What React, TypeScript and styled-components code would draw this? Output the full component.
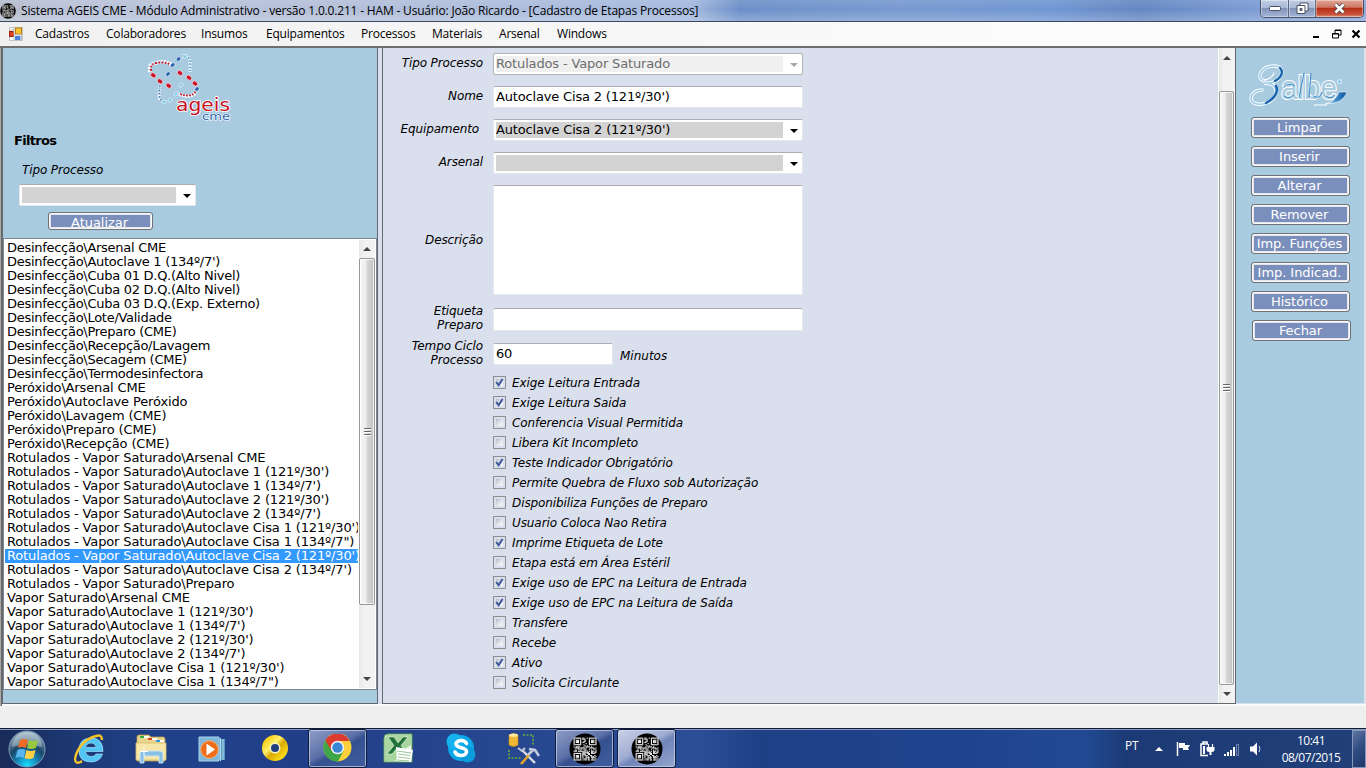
import React from "react";
import styled, { createGlobalStyle, css } from "styled-components";

const GlobalStyle = createGlobalStyle`
  html, body { margin: 0; padding: 0; overflow: hidden; }
  * { box-sizing: border-box; }
`;

const uiFont = `"Open Sans", "Noto Sans", sans-serif`;
const formFont = `"DejaVu Sans", sans-serif`;

const Desktop = styled.div`
  width: 1366px;
  height: 768px;
  display: flex;
  flex-direction: column;
  background: #efefef;
  color: #000;
  overflow: hidden;
`;

/* ---------- title bar and menu ---------- */

const TitleBar = styled.header`
  flex: 0 0 22px;
  display: flex;
  align-items: flex-start;
  border-bottom: 1px solid #3d4862;
  background:
    linear-gradient(180deg, rgba(255, 255, 255, 0.1), rgba(255, 255, 255, 0) 45%, rgba(255, 255, 255, 0.22)),
    linear-gradient(90deg, #b5bccb 0, #b9c2d8 60px, #b4c0d9 330px, #abbcdc 520px, #a5badf 690px, #6d90c9 740px, #7799cf 900px, #7096d2 1050px, #6587c2 1140px, #7a9bd2 1250px, #8ba8d8 1366px);
`;

const AppIconBox = styled.div`
  width: 21px;
  height: 21px;
  padding: 3px 0 0 0;
  svg { display: block; }
`;

const Title = styled.h1`
  margin: 0;
  flex: 1;
  font: 400 12px/21px ${uiFont};
  letter-spacing: -0.18px;
  white-space: nowrap;
`;

const CaptionButtons = styled.div`
  display: flex;
  height: 18px;
  width: 104px;
  margin-right: 2px;
  border: 1px solid #48526b;
  border-top: 0;
  border-radius: 0 0 5px 5px;
  overflow: hidden;
`;

const CaptionButton = styled.button<{ $w: number; $close?: boolean }>`
  width: ${(p) => p.$w}px;
  height: 17px;
  padding: 0;
  border: 0;
  border-right: 1px solid #5c6884;
  display: flex;
  align-items: center;
  justify-content: center;
  background: linear-gradient(180deg, #c3cfe4, #a9b8d5 45%, #8193b9 50%, #a5b6d6);
  box-shadow: inset 0 0 0 1px rgba(255, 255, 255, 0.35);
  ${(p) =>
    p.$close &&
    css`
      border-right: 0;
      background: linear-gradient(180deg, #e0a595, #cf7764 42%, #b83018 50%, #c9523a 85%, #e09a80);
    `}
`;

const MenuBar = styled.nav`
  flex: 0 0 24px;
  display: flex;
  align-items: center;
  padding: 0 5px 0 9px;
  background: linear-gradient(90deg, #f0f0f0, #f4f4f4 25%, #fbfbfb 75%, #fcfcfc);
`;

const MenuItems = styled.ul`
  flex: 1;
  display: flex;
  gap: 20px;
  margin: 0;
  padding: 0 0 0 12px;
  list-style: none;
`;

const MenuItem = styled.li<{ $w: number }>`
  width: ${(p) => p.$w}px;
  font: 400 12px/22px ${uiFont};
  letter-spacing: -0.2px;
  white-space: nowrap;
`;

const ChildControls = styled.div`
  display: flex;
  gap: 9px;
  svg { display: block; }
`;

/* ---------- workspace ---------- */

const Workspace = styled.main`
  flex: 0 0 660px;
  display: flex;
  padding: 0 1px 2px 2px;
  border-top: 2px solid #6e6e6e;
  background: #d9dfed;
  box-shadow: inset 1px 0 #a8a8a8, inset 2px 0 #686868, inset 0 -2px #fafafa;
`;

const FilterPanel = styled.aside`
  width: 376px;
  height: 656px;
  display: flex;
  flex-direction: column;
  background: #a9cbe0;
  border: 1px solid #646871;
  border-top: 0;
`;

const LogoArea = styled.div`
  height: 76px;
  padding: 4px 0 0 144px;
  svg { display: block; }
`;

const FilterTitle = styled.h2`
  margin: 8px 0 0 11px;
  font: 700 13px/17px ${formFont};
  letter-spacing: -0.7px;
`;

const FilterLabel = styled.label`
  margin: 13px 0 0 19px;
  font: italic 400 12px/16px ${formFont};
  letter-spacing: -0.12px;
`;

const FilterField = styled.div`
  width: 177px;
  margin: 6px 0 6px 16px;
`;

const Button = styled.button<{ $w: number; $h: number; $shift?: number; $drop?: number }>`
  flex: none;
  width: ${(p) => p.$w}px;
  height: ${(p) => p.$h}px;
  margin-left: ${(p) => p.$shift ?? 0}px;
  padding: ${(p) => p.$drop ?? 0}px 2px 0 0;
  border: 1px solid #6f7378;
  border-radius: 3px;
  background: #7b8fbd;
  box-shadow: inset 0 0 0 1px #f8f8f8, inset 0 0 0 2px #e4e6ea;
  color: #fff;
  font: 400 13px/17px ${formFont};
  letter-spacing: -0.05px;
  white-space: nowrap;
  overflow: hidden;
`;

const ListBox = styled.div`
  flex: none;
  width: 374px;
  height: 452px;
  margin-top: 8px;
  display: flex;
  padding: 1px;
  background: #fff;
  border: 1px solid #7f8790;
`;

const List = styled.ul`
  width: 353px;
  margin: 0 1px 0 0;
  padding: 1px 0 0;
  list-style: none;
  overflow: hidden;
`;

const ListItem = styled.li<{ $selected?: boolean; $tight?: boolean }>`
  height: 14px;
  padding-left: 2px;
  font: 400 13px/14px ${formFont};
  letter-spacing: ${(p) => (p.$tight ? "-0.28px" : "-0.14px")};
  white-space: nowrap;
  ${(p) => p.$selected && css`background: #3399ff; color: #fff;`}
`;

const Splitter = styled.div`
  width: 4px;
  background: #d9dfed;
`;

const FormPanel = styled.section`
  width: 854px;
  height: 656px;
  display: flex;
  border: 1px solid #646871;
  border-top: 0;
  background: #d9dfed;
`;

const Form = styled.form`
  flex: 1;
  padding: 5px 0 0 0;
`;

const FormRow = styled.div<{ $h: number; $gap: number }>`
  display: flex;
  gap: 10px;
  height: ${(p) => p.$h}px;
  margin-bottom: ${(p) => p.$gap}px;
`;

const Label = styled.label<{ $inset?: number; $lift?: number }>`
  width: 100px;
  display: flex;
  align-items: center;
  justify-content: flex-end;
  text-align: right;
  padding: 0 ${(p) => p.$inset ?? 0}px ${(p) => p.$lift ?? 2}px 0;
  font: italic 400 12px/14px ${formFont};
  letter-spacing: -0.12px;
`;

const inputFrame = css`
  border: 1px solid #e3e7ee;
  border-top-color: #abadb3;
  border-radius: 2px;
  background: #fff;
`;

const TextBox = styled.div<{ $w?: number }>`
  ${inputFrame}
  width: ${(p) => p.$w ?? 310}px;
  padding: 0 2px;
  font: 400 13px/20px ${formFont};
  letter-spacing: -0.17px;
  white-space: nowrap;
`;

const Combo = styled.div<{ $disabled?: boolean; $w: number }>`
  ${inputFrame}
  display: flex;
  align-items: center;
  width: ${(p) => p.$w}px;
  height: 22px;
  padding: 2px 4px 2px 2px;
  ${(p) => p.$disabled && css`border-color: #afb2b8; color: #6d6d6d;`}
`;

const ComboValue = styled.span<{ $disabled?: boolean }>`
  flex: 1;
  height: 16px;
  margin-right: 7px;
  background: ${(p) => (p.$disabled ? "#f0f0f0" : "#d3d3d3")};
  font: 400 13px/16px ${formFont};
  letter-spacing: -0.15px;
  white-space: nowrap;
`;

const ArrowDown = styled.i<{ $color?: string }>`
  border: 4px solid transparent;
  border-top-color: ${(p) => p.$color ?? "#000"};
  border-bottom: 0;
  margin-top: 1px;
`;

const Unit = styled.span`
  margin: 5px 0 0 -3px;
  font: italic 400 12px/16px ${formFont};
  letter-spacing: 0;
`;

const CheckList = styled.div`
  display: flex;
  flex-direction: column;
  padding: 7px 0 0 110px;
`;

const CheckRow = styled.label`
  height: 20px;
  display: flex;
  align-items: center;
  gap: 6px;
  padding-top: 1px;
  font: italic 400 12px/17px ${formFont};
  letter-spacing: -0.09px;
  white-space: nowrap;
`;

const CheckText = styled.span`
  padding-top: 1px;
`;

const CheckBox = styled.span`
  width: 13px;
  height: 13px;
  border: 1px solid #8e8f8f;
  background: linear-gradient(135deg, #b4bac8, #e4e7eb 55%, #fafafa) content-box #f4f4f4;
  padding: 2px;
  position: relative;
  svg { position: absolute; left: 0; top: 0; }
`;

/* ---------- scroll bars ---------- */

const ScrollTrack = styled.div<{ $w: number; $edge?: boolean }>`
  width: ${(p) => p.$w}px;
  display: flex;
  flex-direction: column;
  align-items: stretch;
  background: linear-gradient(90deg, #e8e8e8, #f1f1f1 30%, #f3f3f3);
  ${(p) =>
    p.$edge &&
    css`
      border-left: 1px solid #fafafa;
      padding-right: 1px;
    `}
`;

const ScrollArrow = styled.div<{ $h: number; $down?: boolean }>`
  flex: 0 0 ${(p) => p.$h}px;
  display: flex;
  align-items: center;
  justify-content: center;
  &::before {
    content: "";
    border: 4px solid transparent;
    ${(p) => (p.$down ? "border-top-color: #444; border-bottom: 0;" : "border-bottom-color: #444; border-top: 0;")}
  }
`;

const TrackSpace = styled.div<{ $h: number }>`
  flex: 0 0 ${(p) => p.$h}px;
`;

const Thumb = styled.div<{ $h: number }>`
  flex: 0 0 ${(p) => p.$h}px;
  border: 1px solid #979797;
  border-radius: 2px;
  display: flex;
  align-items: center;
  justify-content: center;
  background: linear-gradient(90deg, #f6f6f6 0, #ebebeb 45%, #d6d6d8 50%, #c3c4c7 95%);
  box-shadow: inset 0 0 0 1px rgba(255, 255, 255, 0.75);
`;

const Grip = styled.span`
  width: 7px;
  height: 8px;
  background: repeating-linear-gradient(180deg, #666 0 1px, #fff 1px 2px, transparent 2px 3px);
`;

const Filler = styled.div`
  flex: 1;
`;

/* ---------- action panel ---------- */

const ActionPanel = styled.aside`
  width: 129px;
  height: 655px;
  display: flex;
  flex-direction: column;
  gap: 8px;
  padding: 12px 0 0 15px;
  background: #a9cbe0;
  border-right: 1px solid #e4e4e4;
  > svg { display: block; flex: none; margin-left: -3px; }
`;

const StatusBar = styled.footer`
  flex: 0 0 22px;
  background: #efefef;
`;

/* ---------- task bar ---------- */

const TaskBar = styled.footer`
  flex: 0 0 40px;
  display: flex;
  border-top: 1px solid #111a33;
  box-shadow: inset 0 1px #8c9bc2;
  background: linear-gradient(90deg, #182a58 0, #1d3a76 80px, #20418a 160px, #213f88 300px, #2b4e97 700px, #1e4087 760px, #1f438d 950px, #214a93 1085px, #1c3b76 1125px, #213f78 1366px);
`;

const TaskSlot = styled.div<{ $w: number; $before?: number; $state?: "open" | "active" }>`
  flex: none;
  width: ${(p) => p.$w}px;
  height: 39px;
  margin-left: ${(p) => p.$before ?? 0}px;
  display: flex;
  align-items: center;
  justify-content: center;
  svg { display: block; }
  ${(p) =>
    p.$state &&
    css`
      border: 1px solid #0e1b3c;
      border-radius: 3px;
      box-shadow: inset 0 0 0 1px rgba(210, 220, 245, 0.65);
      background: ${p.$state === "active"
        ? "linear-gradient(150deg, #cbd2e8, #9fabd0 45%, #7185ba 55%, #93a4cc)"
        : "linear-gradient(150deg, #8f9dc6, #5c70a8 45%, #34508f 55%, #405e9e)"};
    `}
`;

const Tray = styled.div`
  margin-left: auto;
  display: flex;
  align-items: center;
  color: #fff;
`;

const Language = styled.span`
  width: 29px;
  margin-bottom: 5px;
  font: 400 12px/16px ${uiFont};
  letter-spacing: -0.2px;
`;

const TrayIcons = styled.div`
  width: 127px;
  svg { display: block; }
`;

const Clock = styled.time`
  width: 60px;
  margin-right: 11px;
  font: 400 12px/17px ${uiFont};
  letter-spacing: -0.5px;
  text-align: center;
  white-space: nowrap;
`;

const ShowDesktop = styled.button`
  width: 14px;
  height: 38px;
  padding: 0;
  margin-top: 1px;
  border: 1px solid #8395ba;
  background: linear-gradient(135deg, #5f759f, #2f4b80 50%, #1d3667);
`;

/* ---------- drawings ---------- */

const QR_SIZE = 21;
const modules: [number, number][] = [];
for (let y = 0; y < QR_SIZE; y++) {
  for (let x = 0; x < QR_SIZE; x++) {
    const fx = x > 10 ? 20 - x : x;
    const fy = y > 10 ? 20 - y : y;
    const corner = fx < 8 && fy < 8 && !(x > 10 && y > 10);
    let on: boolean;
    if (corner) {
      const ring = Math.max(Math.abs(fx - 3), Math.abs(fy - 3));
      on = ring !== 2 && ring !== 4;
    } else {
      const h = Math.sin(x * 12.9898 + y * 78.233) * 43758.5453;
      on = h - Math.floor(h) < 0.55;
    }
    if (on) modules.push([x, y]);
  }
}

const QrBadge = ({ size }: { size: number }) => (
  <svg width={size} height={size} viewBox="0 0 32 32">
    <circle cx="16" cy="16" r="15.5" fill="#000" />
    {modules.map(([x, y]) => (
      <rect key={`${x}-${y}`} x={4.6 + x * 1.09} y={4.6 + y * 1.09} width="1.12" height="1.12" fill="#f8f8f8" />
    ))}
  </svg>
);

const FormIcon = () => (
  <svg width="14" height="14" viewBox="0 0 14 14">
    <rect x="0.5" y="0.5" width="13" height="13" fill="#fff" stroke="#c5c5c5" />
    <rect x="0.5" y="4.5" width="4" height="5" fill="#e0401f" stroke="#9c1f10" />
    <rect x="6.5" y="1" width="6" height="6" fill="#fbc52d" stroke="#bb7f12" />
    <rect x="6" y="9" width="5.5" height="4" fill="#4b83df" />
    <path d="M5 0v14M0 3h5M5 8h9M12.5 8v6" stroke="#bdbdbd" fill="none" />
  </svg>
);

const CheckMark = () => (
  <svg width="11" height="11" viewBox="0 0 11 11">
    <path d="M2.2 5L4.600 8.200L8.600 2" fill="none" stroke="#3f5499" strokeWidth="2" />
  </svg>
);

const AgeisLogo = () => (
  <svg width="90" height="70" viewBox="0 0 90 70">
    <g fill="none">
      <path d="M3 20Q1 11 9 11q7-4 19 3" stroke="#fff" strokeWidth="3.6" strokeDasharray="2 1" />
      <path d="M4 19Q3 11 10 11q7-2 17 3" stroke="#c8142a" strokeWidth="1.8" strokeDasharray="1.8 1.4" />
      <path d="M35 4q7-2 8 6v10" stroke="#fff" strokeWidth="3" strokeDasharray="1.5 1.5" />
      <path d="M35 4q7-2 8 6v9" stroke="#4aa3d9" strokeWidth="1.5" strokeDasharray="1.5 1.8" />
      <path d="M13 34q-2 10 0 15" stroke="#fff" strokeWidth="3" strokeDasharray="1.5 1.5" />
      <path d="M13 34q-2 10 1 14" stroke="#2f70b5" strokeWidth="1.3" strokeDasharray="1.3 2" />
      <path d="M32 42q12 5 17-2" stroke="#fff" strokeWidth="3.5" strokeDasharray="2 1" />
      <path d="M33 42q12 4 16-3" stroke="#c8142a" strokeWidth="1.7" strokeDasharray="1.8 1.2" />
    </g>
    <g stroke="#fff" strokeWidth="0.6">
      {[
        [6.3, 23.3], [13, 29.3], [21.7, 33.7], [33, 21], [42, 25.7], [48, 31.5],
      ].map(([x, y]) => <ellipse key={`r${x}`} cx={x} cy={y} rx="3" ry="2.2" transform={`rotate(38 ${x} ${y})`} fill="#cc1228" />)}
      {[
        [21, 22], [25.7, 13], [31.5, 7], [50, 37],
      ].map(([x, y]) => <ellipse key={`b${x}`} cx={x} cy={y} rx="2.6" ry="2" transform={`rotate(-40 ${x} ${y})`} fill="#2a65b0" />)}
      {[
        [34, 33], [29, 42], [23, 48], [17, 50], [38, 4.5],
      ].map(([x, y]) => <ellipse key={`c${x}`} cx={x} cy={y} rx="2.3" ry="1.6" transform={`rotate(-40 ${x} ${y})`} fill="#7cc6e8" />)}
    </g>
    <g fontFamily="DejaVu Sans" paintOrder="stroke" strokeLinejoin="round" stroke="#fff">
      <text x="29" y="59" textLength="54" lengthAdjust="spacingAndGlyphs" fontSize="18" fill="#cb1022" strokeWidth="1.6">ageis</text>
      <text x="55" y="68" textLength="28" lengthAdjust="spacingAndGlyphs" fontSize="10" fill="#2d66ac" strokeWidth="1.2">cme</text>
    </g>
  </svg>
);

const AlbeLogo = () => (
  <svg width="102" height="49" viewBox="0 0 102 49">
    <defs>
      <linearGradient id="sw" x1="0" x2="1">
        <stop offset="0" stopColor="#d9f3fb" />
        <stop offset="0.5" stopColor="#3d8bc8" />
        <stop offset="1" stopColor="#0b4f9e" />
      </linearGradient>
    </defs>
    <g fill="none" strokeLinecap="round">
      <path d="M16 21C7 17 14 6 26 6c12 0 9 13-1 16-4 2-7 1-9 1 8 0 13 3 12 10C26 42 16 45 9 44 0 43 1 31 14 30" stroke="#fff" strokeWidth="3.4" />
      <path d="M16 21C7 17 14 6 26 6c12 0 9 13-1 16-4 2-7 1-9 1 8 0 13 3 12 10C26 42 16 45 9 44 0 43 1 31 14 30" stroke="#9fcde8" strokeWidth="1.6" />
      <path d="M32 8c4 4 1 10-5 13M28 26c3 6-2 13-10 17" stroke="#1763ae" strokeWidth="2.4" />
      <path d="M15 20q9-1 11-7" stroke="#fff" strokeWidth="1.2" />
    </g>
    <g fontFamily="Liberation Sans" fontSize="33">
      <text x="33" y="39" textLength="56" lengthAdjust="spacingAndGlyphs" fill="#a9cbe0" stroke="#fff" strokeWidth="2.2" paintOrder="stroke">albe</text>
    </g>
    <path d="M51 38l5-25M61 38l2-25" stroke="#2f86c6" strokeWidth="0.9" />
    <path d="M36 27q5-5 11-1M36 36q5 4 10-1M65 36q7 4 9-4M78 36q6 4 9-1" fill="none" stroke="#2f86c6" strokeWidth="0.9" />
    <path d="M77 44q18 0 22-12h-8q-3 9-14 12z" fill="url(#sw)" stroke="#fff" strokeWidth="0.6" />
    <path d="M66 45h13" stroke="#fff" />
    <rect x="90" y="20" width="3" height="3" fill="#4bb7e2" stroke="#fff" strokeWidth="0.8" />
  </svg>
);

const StartOrb = () => (
  <svg width="38" height="38" viewBox="0 0 38 38">
    <defs>
      <radialGradient id="orb" cx="0.5" cy="0.95" r="0.9">
        <stop offset="0" stopColor="#16e0ff" />
        <stop offset="0.35" stopColor="#1680b4" />
        <stop offset="0.6" stopColor="#1a4668" />
        <stop offset="1" stopColor="#8fa9bb" />
      </radialGradient>
    </defs>
    <circle cx="19" cy="19" r="18" fill="url(#orb)" stroke="#7e9ab5" />
    <path d="M4 17A15 15 0 0 1 34 17Q19 12 4 17z" fill="#fff" opacity="0.33" />
    <path d="M12 10q4-2 8 0l-2 8q-4-2-8 0z" fill="#ee6b26" />
    <path d="M21 10q4 2 9 0l-2 8q-5 2-9 0z" fill="#96ca3c" />
    <path d="M9.500 20q4-2 8 0l-2 8q-4-2-8 0z" fill="#59b6f0" />
    <path d="M18.500 20q4 2 9 0l-2 8q-5 2-9 0z" fill="#fdd045" />
  </svg>
);

const ExplorerE = () => (
  <svg width="32" height="32" viewBox="0 0 32 32">
    <path d="M30 18.500H12.500q1 5 6 5 3 0 4.500-2.500h6.500Q27 29 18 29 6 29 6 17.500 6 5 18 5q12 0 12 13.500zM12.500 14.500H23q-.5-4.500-5-4.500t-5.500 4.500z" fill="#53c5f5" stroke="#bcebff" strokeWidth="0.6" fillRule="evenodd" />
    <path d="M29 7q0-6-6-4Q14 5 7 14 0 25 3 29q2 2 6-1" fill="none" stroke="#f5c32c" strokeWidth="2.4" />
  </svg>
);

const Folders = () => (
  <svg width="34" height="32" viewBox="0 0 34 32">
    <path d="M3 4q0-2 2-2h10l2 2h12q2 0 2 2v22H3z" fill="#ead58c" stroke="#b79c52" strokeWidth="0.8" />
    <path d="M6 3h9v2H6zM14 5h9v2h-9zM22 7h8v2h-8z" fill="#fff" />
    <path d="M6 3h4v2H6z" fill="#2fae45" />
    <path d="M14 5h4v2h-4z" fill="#d9472b" />
    <path d="M22 7h4v2h-4z" fill="#3494dc" />
    <path d="M2 10h30v17H2z" fill="#f6e7a9" stroke="#d7bd6d" strokeWidth="0.8" />
    <path d="M6 30V21q0-3 3-3h17q3 0 3 3v9h-4v-7H10v7z" fill="#88bfe4" stroke="#d5ecfa" strokeWidth="0.8" />
    <path d="M10 14v9M6 18.500h8" stroke="#fff" />
  </svg>
);

const MediaPlayer = () => (
  <svg width="28" height="28" viewBox="0 0 28 28">
    <path d="M10 4h17v21H10z" fill="#5797c1" />
    <path d="M25 4v21M22.500 3v23" stroke="#b6dcf0" />
    <path d="M1 2h20v24H1z" fill="#7fb6db" stroke="#a9d3ec" />
    <circle cx="11.500" cy="14.500" r="8.800" fill="#ee6d1c" stroke="#f8b06d" />
    <path d="M8.500 8.500v12l8.500-6z" fill="#fff" />
  </svg>
);

const Disc = () => (
  <svg width="28" height="28" viewBox="0 0 28 28">
    <defs>
      <linearGradient id="disc" x1="0" x2="1" y2="1">
        <stop offset="0.1" stopColor="#f5c800" />
        <stop offset="0.4" stopColor="#ffef6a" />
        <stop offset="0.55" stopColor="#d9a800" />
        <stop offset="0.8" stopColor="#f9d818" />
      </linearGradient>
    </defs>
    <circle cx="14" cy="13" r="13" fill="url(#disc)" />
    <circle cx="14" cy="13" r="5.500" fill="#f9f4c5" />
    <circle cx="14" cy="13" r="4" fill="#223f80" />
  </svg>
);

const Chrome = () => (
  <svg width="29" height="29" viewBox="0 0 28 28">
    <circle cx="14" cy="13" r="13.500" fill="#fcd03a" />
    <path d="M14 13L2.300 6.200A13.500 13.500 0 0 0 14.500 26.500L20 16z" fill="#3fa648" />
    <path d="M2.300 6.200A13.500 13.500 0 0 1 25.800 6.700H14L8 16z" fill="#dc3b2e" />
    <circle cx="14" cy="13" r="6.500" fill="#f3f3f3" />
    <circle cx="14" cy="13" r="5" fill="#3b85d6" />
  </svg>
);

const Excel = () => (
  <svg width="30" height="32" viewBox="0 0 30 32">
    <path d="M1 5q0-4 4-4h24v28H1z" fill="#e9f3e6" stroke="#4f9f4c" />
    <path d="M4 2h24v10q-8 4-16 16H2V5z" fill="#a9d6a0" />
    <path d="M5 4h6l4 6 5-6h5l-7 8.500L23 20h-5l-4-5-5 6H4l7-8.500z" fill="#21733a" stroke="#fff" strokeWidth="0.5" />
    <path d="M13 14l17 3-2 12-14-1z" fill="#fff" />
    <path d="M14 18l14 2M15 21l12 1.500M15 24l12 1.500M14 27l12 1" stroke="#9cc79c" />
  </svg>
);

const Skype = () => (
  <svg width="32" height="32" viewBox="0 0 32 32">
    <circle cx="16" cy="15" r="13" fill="#0aa8e8" />
    <circle cx="9.500" cy="8.500" r="8" fill="#16b2ef" />
    <circle cx="22.500" cy="21.500" r="8" fill="#089cdc" />
    <path d="M21.500 10.500Q20 7.500 16 7.500t-5 3.300c0 5.200 10.500 2.700 10.500 7.700 0 2.500-2.500 4-5.500 4q-4.500 0-6-3.500" fill="none" stroke="#fff" strokeWidth="3.600" strokeLinecap="round" />
  </svg>
);

const Tools = () => (
  <svg width="34" height="34" viewBox="0 0 34 34">
    <path d="M17 3h10v10M3 18v8h12" fill="none" stroke="#62b238" strokeWidth="1.600" strokeDasharray="2 1.500" />
    <path d="M3 3q4.500-3 9 0v10q-4.500 3-9 0z" fill="#eeb836" stroke="#c18a1c" strokeWidth="0.6" />
    <ellipse cx="7.500" cy="3.200" rx="4.400" ry="1.600" fill="#ffe9a3" />
    <path d="M16 18l13 13" stroke="#d9dde5" strokeWidth="2.400" />
    <path d="M12 16l4 3 3-3" stroke="#c5ccd9" strokeWidth="2" fill="none" />
    <path d="M15 32l8-9" stroke="#e5a32c" strokeWidth="2.600" />
    <path d="M22 23l5-5M23 17l6 1 4 6" stroke="#c1cbdc" strokeWidth="2.600" fill="none" />
  </svg>
);

const TrayGlyphs = () => (
  <svg width="116" height="20" viewBox="0 0 116 20">
    <path d="M1 12l4-4 4 4z" fill="#fff" />
    <path d="M23.500 3v14" stroke="#fff" strokeWidth="1.500" />
    <path d="M25 4h6v2h5l-2 3 1 2h-6V9h-4z" fill="#fff" />
    <path d="M54 16.500h-7V5h7M49 3h4v2h-4z" fill="none" stroke="#fff" strokeWidth="1.500" />
    <path d="M49 7h2v8h-2z" fill="#fff" />
    <path d="M52.500 8h8v2.500q0 2.500-3 2.500v3h-2v-3q-3 0-3-2.500z" fill="#fff" />
    <path d="M54.500 5v3M58.500 5v3" stroke="#fff" strokeWidth="1.200" />
    <path d="M70 15h2v2h-2zM73 13h2v4h-2zM76 11h2v6h-2zM79 8h2v9h-2z" fill="#fff" />
    <path d="M82.500 5.500h2v11h-2z" fill="none" stroke="#8898ba" strokeWidth="0.800" />
    <path d="M96 7.500h3l4-4v13l-4-4h-3z" fill="#fff" />
    <path d="M105 7q2 3 0 6" fill="none" stroke="#c8d4ea" />
  </svg>
);

/* ---------- data ---------- */

const menus: [string, number][] = [
  ["Cadastros", 51], ["Colaboradores", 75], ["Insumos", 45], ["Equipamentos", 75],
  ["Processos", 51], ["Materiais", 47], ["Arsenal", 38], ["Windows", 50],
];

const DE = "Desinfecção\\";
const PE = "Peróxido\\";
const RV = "Rotulados - Vapor Saturado\\";
const VS = "Vapor Saturado\\";
const steps = [
  DE + "Arsenal CME",
  DE + "Autoclave 1 (134º/7')",
  DE + "Cuba 01 D.Q.(Alto Nivel)",
  DE + "Cuba 02 D.Q.(Alto Nivel)",
  DE + "Cuba 03 D.Q.(Exp. Externo)",
  DE + "Lote/Validade",
  DE + "Preparo (CME)",
  DE + "Recepção/Lavagem",
  DE + "Secagem (CME)",
  DE + "Termodesinfectora",
  PE + "Arsenal CME",
  PE + "Autoclave Peróxido",
  PE + "Lavagem (CME)",
  PE + "Preparo (CME)",
  PE + "Recepção (CME)",
  RV + "Arsenal CME",
  RV + "Autoclave 1 (121º/30')",
  RV + "Autoclave 1 (134º/7')",
  RV + "Autoclave 2 (121º/30')",
  RV + "Autoclave 2 (134º/7')",
  RV + "Autoclave Cisa 1 (121º/30')",
  RV + "Autoclave Cisa 1 (134º/7\")",
  RV + "Autoclave Cisa 2 (121º/30')",
  RV + "Autoclave Cisa 2 (134º/7')",
  RV + "Preparo",
  VS + "Arsenal CME",
  VS + "Autoclave 1 (121º/30')",
  VS + "Autoclave 1 (134º/7')",
  VS + "Autoclave 2 (121º/30')",
  VS + "Autoclave 2 (134º/7')",
  VS + "Autoclave Cisa 1 (121º/30')",
  VS + "Autoclave Cisa 1 (134º/7\")",
];

const checks: [string, boolean][] = [
  ["Exige Leitura Entrada", true],
  ["Exige Leitura Saida", true],
  ["Conferencia Visual Permitida", false],
  ["Libera Kit Incompleto", false],
  ["Teste Indicador Obrigatório", true],
  ["Permite Quebra de Fluxo sob Autorização", false],
  ["Disponibiliza Funções de Preparo", false],
  ["Usuario Coloca Nao Retira", false],
  ["Imprime Etiqueta de Lote", true],
  ["Etapa está em Área Estéril", false],
  ["Exige uso de EPC na Leitura de Entrada", true],
  ["Exige uso de EPC na Leitura de Saída", true],
  ["Transfere", false],
  ["Recebe", false],
  ["Ativo", true],
  ["Solicita Circulante", false],
];

const actions = ["Limpar", "Inserir", "Alterar", "Remover", "Imp. Funções", "Imp. Indicad.", "Histórico", "Fechar"];

const ComboBox = ({ value, disabled, width = 310 }: { value?: string; disabled?: boolean; width?: number }) => (
  <Combo $disabled={disabled} $w={width}>
    <ComboValue $disabled={disabled}>{value}</ComboValue>
    <ArrowDown $color={disabled ? "#a8a8a8" : undefined} />
  </Combo>
);

export default function App() {
  return (
    <Desktop>
      <GlobalStyle />
      <TitleBar>
        <AppIconBox><QrBadge size={16} /></AppIconBox>
        <Title>Sistema AGEIS CME - Módulo Administrativo - versão 1.0.0.211 - HAM - Usuário: João Ricardo - [Cadastro de Etapas Processos]</Title>
        <CaptionButtons>
          <CaptionButton $w={28}>
            <svg width="12" height="5"><rect x="0.5" y="0.5" width="11" height="4" rx="1" fill="#fff" stroke="#4b5265" /></svg>
          </CaptionButton>
          <CaptionButton $w={27}>
            <svg width="13" height="13" viewBox="0 0 13 13">
              <path d="M4 1h8v8H4z" fill="#fff" stroke="#4b5265" />
              <path d="M1 3.500h8v8H1z" fill="#fff" stroke="#4b5265" />
              <path d="M4 6.500h2v2H4z" fill="#8998b8" stroke="#4b5265" />
            </svg>
          </CaptionButton>
          <CaptionButton $w={47} $close>
            <svg width="13" height="11" viewBox="0 0 13 11">
              <path d="M2.500 1.500l8 8M10.500 1.500l-8 8" stroke="#4a4550" strokeWidth="4.500" />
              <path d="M2.500 1.500l8 8M10.500 1.500l-8 8" stroke="#fff" strokeWidth="2.600" />
            </svg>
          </CaptionButton>
        </CaptionButtons>
      </TitleBar>

      <MenuBar>
        <FormIcon />
        <MenuItems>
          {menus.map(([m, w]) => <MenuItem key={m} $w={w}>{m}</MenuItem>)}
        </MenuItems>
        <ChildControls>
          <svg width="10" height="10"><path d="M0 8h6" stroke="#000" strokeWidth="2" /></svg>
          <svg width="10" height="10" viewBox="0 0 10 10">
            <path d="M3 4V1h6v5H7M3 1.500h6" fill="none" stroke="#000" />
            <path d="M0.500 4.500h6v4.500h-6zM0.500 5h6" fill="none" stroke="#000" />
          </svg>
          <svg width="10" height="10" viewBox="0 0 10 10"><path d="M1.500 1.500l7 7M8.500 1.500l-7 7" stroke="#000" strokeWidth="2.200" /></svg>
        </ChildControls>
      </MenuBar>

      <Workspace>
        <FilterPanel>
          <LogoArea><AgeisLogo /></LogoArea>
          <FilterTitle>Filtros</FilterTitle>
          <FilterLabel>Tipo Processo</FilterLabel>
          <FilterField><ComboBox width={177} /></FilterField>
          <Button $w={105} $h={18} $shift={45} $drop={1}>Atualizar</Button>
          <ListBox>
            <List>
              {steps.map((s, i) => (
                <ListItem key={i} $selected={i === 22} $tight={s.startsWith(DE)}>{s}</ListItem>
              ))}
            </List>
            <ScrollTrack $w={16}>
              <ScrollArrow $h={18} />
              <Thumb $h={347}><Grip /></Thumb>
              <Filler />
              <ScrollArrow $h={18} $down />
            </ScrollTrack>
          </ListBox>
        </FilterPanel>
        <Splitter />
        <FormPanel>
          <Form>
            <FormRow $h={22} $gap={11}>
              <Label>Tipo Processo</Label>
              <ComboBox value="Rotulados - Vapor Saturado" disabled />
            </FormRow>
            <FormRow $h={22} $gap={11}>
              <Label>Nome</Label>
              <TextBox>Autoclave Cisa 2 (121º/30')</TextBox>
            </FormRow>
            <FormRow $h={22} $gap={11}>
              <Label $inset={4}>Equipamento</Label>
              <ComboBox value="Autoclave Cisa 2 (121º/30')" />
            </FormRow>
            <FormRow $h={22} $gap={11}>
              <Label>Arsenal</Label>
              <ComboBox />
            </FormRow>
            <FormRow $h={110} $gap={13}>
              <Label $lift={0}>Descrição</Label>
              <TextBox />
            </FormRow>
            <FormRow $h={23} $gap={12}>
              <Label $lift={4}>Etiqueta<br />Preparo</Label>
              <TextBox />
            </FormRow>
            <FormRow $h={22} $gap={0}>
              <Label>Tempo Ciclo<br />Processo</Label>
              <TextBox $w={120}>60</TextBox>
              <Unit>Minutos</Unit>
            </FormRow>
            <CheckList>
              {checks.map(([text, on]) => (
                <CheckRow key={text}>
                  <CheckBox>{on && <CheckMark />}</CheckBox>
                  <CheckText>{text}</CheckText>
                </CheckRow>
              ))}
            </CheckList>
          </Form>
          <ScrollTrack $w={17} $edge>
            <ScrollArrow $h={20} />
            <TrackSpace $h={23} />
            <Thumb $h={594}><Grip /></Thumb>
            <Filler />
            <ScrollArrow $h={18} $down />
          </ScrollTrack>
        </FormPanel>
        <ActionPanel>
          <AlbeLogo />
          {actions.map((a) => (
            <Button key={a} $w={99} $h={21} $shift={a === "Fechar" ? 1 : 0}>{a}</Button>
          ))}
        </ActionPanel>
      </Workspace>

      <StatusBar />
      <TaskBar>
        <TaskSlot $w={54}><StartOrb /></TaskSlot>
        <TaskSlot $w={70}><ExplorerE /></TaskSlot>
        <TaskSlot $w={54}><Folders /></TaskSlot>
        <TaskSlot $w={68}><MediaPlayer /></TaskSlot>
        <TaskSlot $w={58}><Disc /></TaskSlot>
        <TaskSlot $w={59} $before={4} $state="open"><Chrome /></TaskSlot>
        <TaskSlot $w={62}><Excel /></TaskSlot>
        <TaskSlot $w={64}><Skype /></TaskSlot>
        <TaskSlot $w={59}><Tools /></TaskSlot>
        <TaskSlot $w={59} $before={3} $state="open"><QrBadge size={32} /></TaskSlot>
        <TaskSlot $w={59} $before={3} $state="active"><QrBadge size={32} /></TaskSlot>
        <Tray>
          <Language>PT</Language>
          <TrayIcons><TrayGlyphs /></TrayIcons>
          <Clock>10:41<br />08/07/2015</Clock>
          <ShowDesktop />
        </Tray>
      </TaskBar>
    </Desktop>
  );
}
